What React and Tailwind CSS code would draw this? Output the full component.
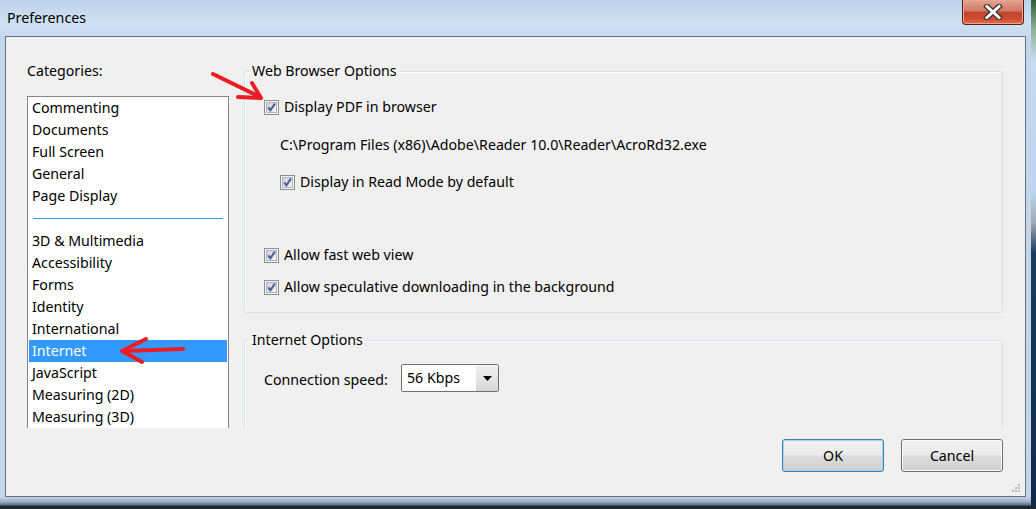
import React from "react";

const topItems = ["Commenting", "Documents", "Full Screen", "General", "Page Display"];
const bottomItems = [
  "3D & Multimedia",
  "Accessibility",
  "Forms",
  "Identity",
  "International",
  "Internet",
  "JavaScript",
  "Measuring (2D)",
  "Measuring (3D)",
];

const CheckBox = () => (
  <svg width="15" height="15" viewBox="0 0 15 15" className="shrink-0">
    <defs>
      <linearGradient id="cbfill" x1="0" y1="0" x2="1" y2="1">
        <stop offset="0" stopColor="#c9ced6" />
        <stop offset="1" stopColor="#f6f6f6" />
      </linearGradient>
    </defs>
    <rect x="0.5" y="0.5" width="14" height="14" fill="#f4f4f4" stroke="#8e8f8f" />
    <rect x="2.5" y="2.5" width="10" height="10" fill="url(#cbfill)" stroke="#b0b5bc" />
    <path d="M4.2 7.4 L6.4 10.2 L10.9 3.6" fill="none" stroke="#4b5c9c" strokeWidth="2" />
  </svg>
);

const CheckRow = ({ label, indent }) => (
  <div className={`flex items-center h-[22px] gap-[5px] ${indent ? "pl-[16px]" : ""}`}>
    <CheckBox />
    <span>{label}</span>
  </div>
);

const Button = ({ label, primary }) => (
  <button
    type="button"
    className={`w-[102px] h-[33px] rounded-[3px] border text-[14.2px] text-black bg-[linear-gradient(to_bottom,#f2f2f2_0%,#ebebeb_48%,#dddddd_52%,#cfcfcf_100%)] ${
      primary
        ? "border-[#3c7fb1] shadow-[inset_0_0_0_1px_#9ed6f3]"
        : "border-[#707070] shadow-[inset_0_0_0_1px_#fbfbfb]"
    }`}
  >
    {label}
  </button>
);

export default function App() {
  return (
    <div className="relative w-[1036px] h-[509px] overflow-hidden bg-[#1d2733] flex flex-col font-['Noto_Sans',sans-serif] text-[14.2px] leading-[22px] text-black">
      <div className="flex h-[506px]">
        {/* window */}
        <div className="w-[1031px] h-[506px] flex flex-col bg-[#c3d6ea]">
          {/* title bar */}
          <div className="h-[36px] flex justify-between bg-[linear-gradient(to_bottom,#bcd2ea,#cfe0f2_60%,#c8dbef)]">
            <div className="pl-[7px] flex items-center">Preferences</div>
            <div className="mr-[7px] w-[62px] h-[25px] rounded-b-[4px] border border-t-0 border-[#5b1d14] flex items-center justify-center bg-[linear-gradient(to_bottom,#e3a493_0%,#d27a66_45%,#c2442b_52%,#cf4f33_80%,#e2714f_100%)] shadow-[inset_0_0_0_1px_#e9a595]">
              <svg width="20" height="16" viewBox="0 0 20 16">
                <path d="M4 2.5 L16 13.5 M16 2.5 L4 13.5" stroke="#3e3434" strokeWidth="5.5" strokeLinecap="square" />
                <path d="M4 2.5 L16 13.5 M16 2.5 L4 13.5" stroke="#ffffff" strokeWidth="3" strokeLinecap="square" />
              </svg>
            </div>
          </div>

          {/* client area */}
          <div className="ml-[5px] w-[1021px] h-[461px] border border-[#66727f] bg-[#f0f0f0] flex flex-col relative">
            <div className="h-[391px] overflow-hidden flex pl-[21px]">
              {/* categories */}
              <div className="w-[202px] shrink-0">
                <div className="mt-[23px]">Categories:</div>
                <div className="mt-[14px] h-[340px] border border-[#828790] bg-white">
                  {topItems.map((item) => (
                    <div key={item} className="h-[22px] pl-[4px]">
                      {item}
                    </div>
                  ))}
                  <div className="h-[23px] pt-[11px] px-[5px]">
                    <div className="h-px bg-[#3399ff]" />
                  </div>
                  {bottomItems.map((item) =>
                    item === "Internet" ? (
                      <div key={item} className="h-[22px] mx-px pl-[3px] bg-[#3399ff] text-white">
                        {item}
                      </div>
                    ) : (
                      <div key={item} className="h-[22px] pl-[4px]">
                        {item}
                      </div>
                    )
                  )}
                </div>
              </div>

              {/* options */}
              <div className="ml-[15px] w-[759px] shrink-0">
                <fieldset className="mt-[23px] border border-[#d5dfe5] rounded-[3px] pb-[14px] shadow-[inset_1px_1px_0_#ffffff]">
                  <legend className="ml-[5px] px-[2px] leading-[22px]">Web Browser Options</legend>
                  <div className="pl-[19px]">
                    <div className="mt-[14px]">
                      <CheckRow label="Display PDF in browser" />
                    </div>
                    <div className="mt-[16px] h-[22px] pl-[16px]">
                      C:\Program Files (x86)\Adobe\Reader 10.0\Reader\AcroRd32.exe
                    </div>
                    <div className="mt-[15px]">
                      <CheckRow label="Display in Read Mode by default" indent />
                    </div>
                    <div className="mt-[51px]">
                      <CheckRow label="Allow fast web view" />
                    </div>
                    <div className="mt-[10px]">
                      <CheckRow label="Allow speculative downloading in the background" />
                    </div>
                  </div>
                </fieldset>

                <fieldset className="mt-[16px] h-[140px] border border-[#d5dfe5] rounded-[3px] shadow-[inset_1px_1px_0_#ffffff]">
                  <legend className="ml-[5px] px-[2px] leading-[22px]">Internet Options</legend>
                  <div className="pl-[19px] mt-[13px] flex items-center h-[28px]">
                    <div className="w-[137px] pt-[3px]">Connection speed:</div>
                    <div className="w-[98px] h-[28px] border border-[#707070] rounded-[2px] flex overflow-hidden">
                      <div className="flex-1 bg-white pl-[5px] flex items-center">56 Kbps</div>
                      <div className="w-[22px] flex items-center justify-center bg-[linear-gradient(to_bottom,#f2f2f2,#e6e6e6_50%,#d6d6d6)]">
                        <svg width="9" height="5" viewBox="0 0 9 5">
                          <path d="M0 0 H9 L4.5 5 Z" fill="#000" />
                        </svg>
                      </div>
                    </div>
                  </div>
                </fieldset>
              </div>
            </div>

            {/* buttons */}
            <div className="h-[68px] pt-[11px] pr-[22px] flex justify-end items-start gap-[17px]">
              <Button label="OK" primary />
              <Button label="Cancel" />
            </div>

            {/* resize grip */}
            <svg className="absolute right-[4px] bottom-[3px]" width="10" height="10" viewBox="0 0 10 10">
              {[
                [7, 1],
                [4, 4],
                [7, 4],
                [1, 7],
                [4, 7],
                [7, 7],
              ].map(([x, y]) => (
                <rect key={`${x}-${y}`} x={x} y={y} width="2" height="2" fill="#b7bcc2" />
              ))}
            </svg>
          </div>

          {/* bottom frame */}
          <div className="flex-1 bg-[linear-gradient(to_bottom,#c5d2e0,#9fb1c4_50%,#5f7690_85%,#2f3d4c)]" />
        </div>

        {/* desktop strip on right */}
        <div className="flex-1 bg-[linear-gradient(to_bottom,#2f5a3a_0%,#8fb59a_6%,#c5dcf2_12%,#bcd4ee_38%,#9ea9b4_44%,#1d3a5c_50%,#0f2a47_100%)]" />
      </div>
      <div className="flex-1 bg-[#1f2831]" />

      {/* red annotation arrows */}
      <svg className="absolute inset-0 pointer-events-none" width="1036" height="509" viewBox="0 0 1036 509">
        <g stroke="#ec1c24" strokeWidth="4" strokeLinecap="round" strokeLinejoin="round" fill="none">
          <path d="M213 74 L260 97" />
          <path d="M252 83 L261 98 L238 97" />
          <path d="M183 349 L124 351" />
          <path d="M146 339 L122 351 L142 362" />
        </g>
      </svg>
    </div>
  );
}
